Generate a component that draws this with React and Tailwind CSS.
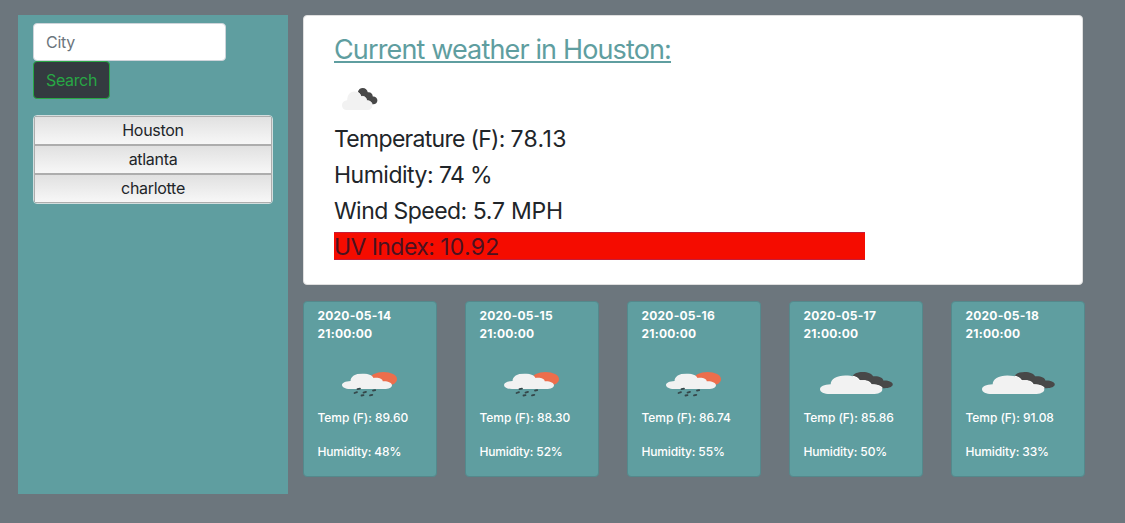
const days = [
  { date: "2020-05-14", temp: "89.60", humidity: "48%", rain: true },
  { date: "2020-05-15", temp: "88.30", humidity: "52%", rain: true },
  { date: "2020-05-16", temp: "86.74", humidity: "55%", rain: true },
  { date: "2020-05-17", temp: "85.86", humidity: "50%", rain: false },
  { date: "2020-05-18", temp: "91.08", humidity: "33%", rain: false },
];

const CLOUD =
  "M4.8 22C2 22 0 20 0 17.2C0 14.6 2 12.5 5.2 12.3C5.2 7 8 3.4 12.3 3.4C15.8 3.4 18.3 5.4 19.1 8.7C21.8 7.6 24.6 9.4 24.7 12.7C28 12.4 30.3 14.6 30.3 17.4C30.3 20.2 28.3 22 25.6 22Z";

const SHADE =
  "M15.8 4.2C16.4 1.6 18.3 0 20.8 0C23.4 0 25.2 1.7 25.8 4.3C28.6 3.8 30.7 5.8 30.8 8.4C33.6 8.2 35.4 10 35.4 12.3C35.4 14.8 33.6 16.2 31.4 16.2C29.6 16.2 28.2 15.6 27.2 14.2L18 12Z";

function CloudsIcon({ id, className }) {
  return (
    <svg viewBox="0 0 36 22" preserveAspectRatio="none" className={className}>
      <defs>
        <clipPath id={id}>
          <path d={SHADE} />
        </clipPath>
      </defs>
      <g clipPath={`url(#${id})`}>
        <rect width="36" height="22" fill="#484848" />
        <path d={CLOUD} fill="#fff" stroke="#fff" strokeWidth="0.8" />
      </g>
      <path d={CLOUD} fill="#f2f2f2" />
    </svg>
  );
}

function RainIcon({ className }) {
  return (
    <svg viewBox="0 0 55 26" className={className}>
      <ellipse cx="41.5" cy="8.2" rx="13.5" ry="7.2" fill="#ec6e4c" />
      <svg width="50" height="15.5" y="2.5" viewBox="0 3.4 30.3 18.6" preserveAspectRatio="none">
        <path d={CLOUD} fill="#f2f2f2" />
      </svg>
      <g stroke="#35474a" strokeWidth="1.8" strokeLinecap="round">
        <path d="M15.5 18.1L18 17.7M12.5 22L15 21.1M21.5 21.6L24 20.8M31 19.6L33.2 19.2M19.5 24.5L21.5 24.2M28 24.4L30.3 23.8" />
      </g>
    </svg>
  );
}

function DayCard({ day, index }) {
  return (
    <article className="h-[176px] w-[134px] rounded-[4px] border border-[#54898c] bg-[#5f9ea0] pl-[14px] pt-[5px] text-white">
      <h2 className="text-[12px] leading-[18px] font-bold tracking-[0.22px]">
        {day.date}
        <br />
        21:00:00
      </h2>
      <div className="flex h-[66px] pt-[28px]">
        {day.rain ? (
          <RainIcon className="ml-[24px] h-[26px] w-[55px]" />
        ) : (
          <CloudsIcon id={`shade-${index}`} className="ml-[16px] mt-[1px] h-[22px] w-[74px]" />
        )}
      </div>
      <p className="mb-4 text-[12px] leading-[18px] font-medium tracking-[-0.06px]">Temp (F): {day.temp}</p>
      <p className="text-[12px] leading-[18px] font-medium tracking-[-0.15px]">Humidity: {day.humidity}</p>
    </article>
  );
}

export default function App() {
  return (
    <div className="flex h-[523px] w-[1125px] gap-[15px] bg-[#6c767d] pl-[18px] pt-[15px] font-['Inter',sans-serif] text-[#212529]">
      <aside className="h-[479px] w-[270px] bg-[#5f9ea0] px-[15px] pt-2">
        <input
          placeholder="City"
          className="block h-[38px] w-[193px] rounded-[4px] border border-[#ced4da] bg-white px-3 text-[16px] tracking-[-0.3px] placeholder:text-[#6c757d]"
        />
        <button className="block h-[38px] w-[77px] rounded-[4px] border border-[#28a745] bg-[#343a40] text-[16px] tracking-[-0.35px] text-[#28a745]">
          Search
        </button>
        <div className="mt-4 overflow-hidden rounded-[4px] border border-[#d3dede]">
          {["Houston", "atlanta", "charlotte"].map((city) => (
            <button
              key={city}
              className="block h-[29px] w-full border border-[#adadad] bg-linear-to-b from-[#e1e1e1] to-[#f7f7f7] text-center text-[16px] leading-[27px] tracking-[-0.3px]"
            >
              {city}
            </button>
          ))}
        </div>
      </aside>
      <main className="-ml-[0.5px] flex flex-col gap-4">
        <section className="ml-[0.5px] h-[270px] w-[780px] rounded-[4px] border border-[#dfdfdf] bg-white pl-[30px] pt-[17px]">
          <h1 className="text-[27px] leading-[34px] tracking-[-0.86px] text-[#5f9ea0] underline decoration-2 underline-offset-[2px]">
            Current weather in Houston:
          </h1>
          <CloudsIcon id="shade-now" className="ml-2 mt-[21px] h-[22px] w-[36px]" />
          <div className="mt-[14px] flex w-[531px] flex-col gap-2 text-[23px] leading-[30px]">
            <p className="h-7 tracking-[-0.7px]">
              Temperature (F): <span className="tracking-[0.35px]">78.13</span>
            </p>
            <p className="h-7 tracking-[-0.5px]">
              Humidity: <span className="tracking-[-0.7px]">74 %</span>
            </p>
            <p className="h-7 tracking-[-0.55px]">
              Wind Speed: <span className="tracking-[-0.2px]">5.7 MPH</span>
            </p>
            <p className="h-7 border-y border-[#c51c38] bg-[#f50c00] leading-[28px] tracking-[-0.57px] text-[#4a1220]">
              UV Index: <span className="tracking-[0.3px]">10.92</span>
            </p>
          </div>
        </section>
        <div className="flex gap-[28px]">
          {days.map((day, i) => (
            <DayCard key={day.date} day={day} index={i} />
          ))}
        </div>
      </main>
    </div>
  );
}
